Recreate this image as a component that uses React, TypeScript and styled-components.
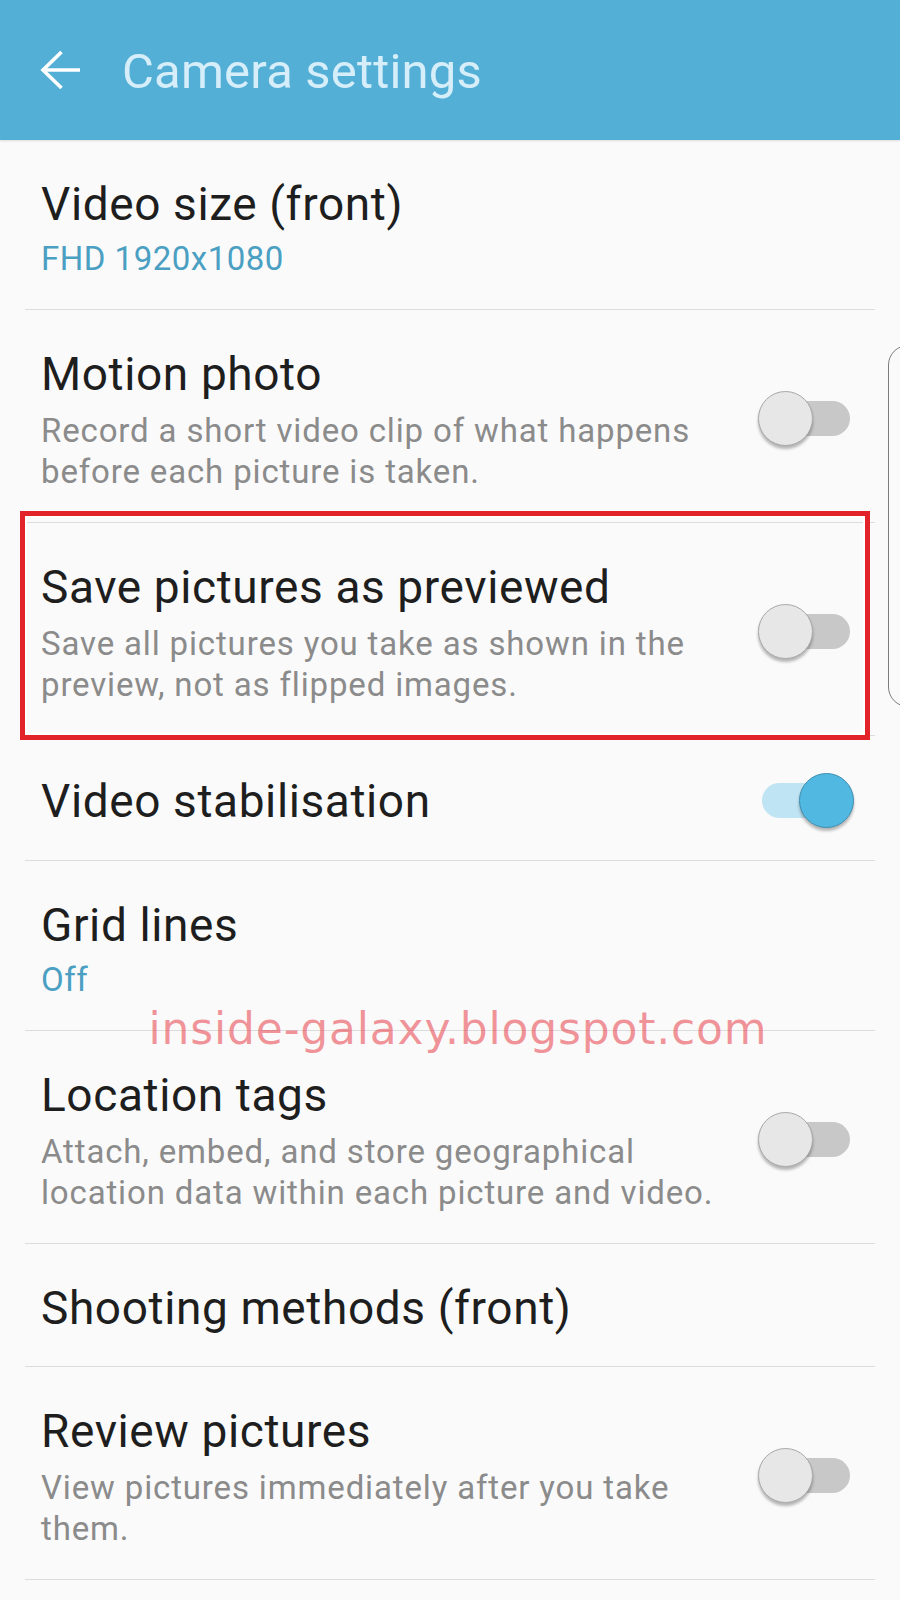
import React from "react";
import styled, { createGlobalStyle } from "styled-components";

const GlobalStyle = createGlobalStyle`
  html, body {
    margin: 0;
    padding: 0;
    background: #fafafa;
  }
  body {
    font-family: Roboto, "Noto Sans", "Liberation Sans", sans-serif;
  }
  * { box-sizing: border-box; }
`;

const Page = styled.div`
  position: relative;
  width: 900px;
  min-height: 1600px;
  overflow: hidden;
  background: #fafafa;
`;

const Header = styled.header`
  height: 140px;
  background: #54afd6;
  display: flex;
  align-items: center;
  padding: 2px 0 0 40px;
  box-shadow: 0 1px 2px rgba(0, 0, 0, 0.12);
  position: relative;
  z-index: 1;
`;

const BackIcon = styled.svg`
  width: 40px;
  height: 40px;
  flex: none;
  margin-top: -2px;
`;

const HeaderTitle = styled.h1`
  margin: 0 0 0 42px;
  font-family: Roboto, sans-serif;
  font-weight: 400;
  font-size: 49px;
  color: #d5eef9;
  letter-spacing: 0.2px;
`;

const List = styled.div`
  display: flex;
  flex-direction: column;
  padding: 0 25px;
`;

const Row = styled.div`
  display: flex;
  align-items: center;
  gap: 18px;
  padding: 36px 21px 30px 16px;
  border-bottom: 1px solid #dcdcdc;
`;

const TextBlock = styled.div`
  flex: 1;
  min-width: 0;
  max-width: 700px;
  display: flex;
  flex-direction: column;
`;

const Title = styled.div`
  font-size: 46px;
  line-height: 56px;
  color: #1e1e1e;
  letter-spacing: 0.6px;
`;

const Value = styled.div`
  margin-top: 7px;
  font-size: 33px;
  line-height: 40px;
  color: #4a9fc2;
  letter-spacing: 0.5px;
`;

const Description = styled.div`
  margin-top: 8px;
  font-size: 33px;
  line-height: 41px;
  color: #8b8b8b;
  letter-spacing: 0.85px;
`;

const SwitchBox = styled.div<{ $on: boolean }>`
  position: relative;
  flex: none;
  width: 96px;
  height: 58px;
  &::before {
    content: "";
    position: absolute;
    left: 4px;
    right: 4px;
    top: 11px;
    height: 35px;
    border-radius: 18px;
    background: ${(p) => (p.$on ? "#bfe4f4" : "#c8c8c8")};
  }
`;

const Thumb = styled.span<{ $on: boolean }>`
  position: absolute;
  top: 1px;
  ${(p) => (p.$on ? "right: 0;" : "left: 0;")}
  width: 55px;
  height: 55px;
  border-radius: 50%;
  background: ${(p) => (p.$on ? "#51b8e1" : "#e7e7e7")};
  border: 1.5px solid ${(p) => (p.$on ? "#3f8fb1" : "#a9a9a9")};
  box-shadow: 0 3px 3px rgba(0, 0, 0, 0.28);
`;

const Highlight = styled.div`
  position: absolute;
  left: 20px;
  top: 511px;
  width: 850px;
  height: 229px;
  border: 5px solid #e3232a;
  box-shadow: inset 0 0 0 2px #ffffff;
  pointer-events: none;
`;

const EdgeHandle = styled.div`
  position: absolute;
  left: 888px;
  top: 345px;
  width: 40px;
  height: 362px;
  border: 1.5px solid #7c7c7c;
  border-radius: 24px;
  pointer-events: none;
`;

const Watermark = styled.div`
  position: absolute;
  left: 0;
  right: 0;
  top: 997px;
  text-align: center;
  padding-left: 16px;
  font-family: "DejaVu Sans", Verdana, sans-serif;
  font-size: 44px;
  line-height: 64px;
  letter-spacing: 0.8px;
  color: rgba(232, 68, 78, 0.56);
  pointer-events: none;
`;

type Item = {
  title: string;
  value?: string;
  description?: string;
  toggle?: boolean;
};

const items: Item[] = [
  { title: "Video size (front)", value: "FHD 1920x1080" },
  {
    title: "Motion photo",
    description: "Record a short video clip of what happens before each picture is taken.",
    toggle: false,
  },
  {
    title: "Save pictures as previewed",
    description: "Save all pictures you take as shown in the preview, not as flipped images.",
    toggle: false,
  },
  { title: "Video stabilisation", toggle: true },
  { title: "Grid lines", value: "Off" },
  {
    title: "Location tags",
    description: "Attach, embed, and store geographical location data within each picture and video.",
    toggle: false,
  },
  { title: "Shooting methods (front)" },
  {
    title: "Review pictures",
    description: "View pictures immediately after you take them.",
    toggle: false,
  },
];

const Switch = ({ on }: { on: boolean }) => (
  <SwitchBox $on={on}>
    <Thumb $on={on} />
  </SwitchBox>
);

export default function App() {
  return (
    <>
      <GlobalStyle />
      <Page>
        <Header>
          <BackIcon viewBox="0 0 40 40" fill="none" stroke="#ffffff" strokeWidth="3.6" strokeLinecap="butt">
            <path d="M40 20 H3" />
            <path d="M21.5 2 L3 20 L21.5 38" strokeLinejoin="miter" />
          </BackIcon>
          <HeaderTitle>Camera settings</HeaderTitle>
        </Header>
        <List>
          {items.map((it) => (
            <Row key={it.title}>
              <TextBlock>
                <Title>{it.title}</Title>
                {it.value && <Value>{it.value}</Value>}
                {it.description && <Description>{it.description}</Description>}
              </TextBlock>
              {it.toggle !== undefined && <Switch on={it.toggle} />}
            </Row>
          ))}
        </List>
        <Highlight />
        <EdgeHandle />
        <Watermark>inside-galaxy.blogspot.com</Watermark>
      </Page>
    </>
  );
}
